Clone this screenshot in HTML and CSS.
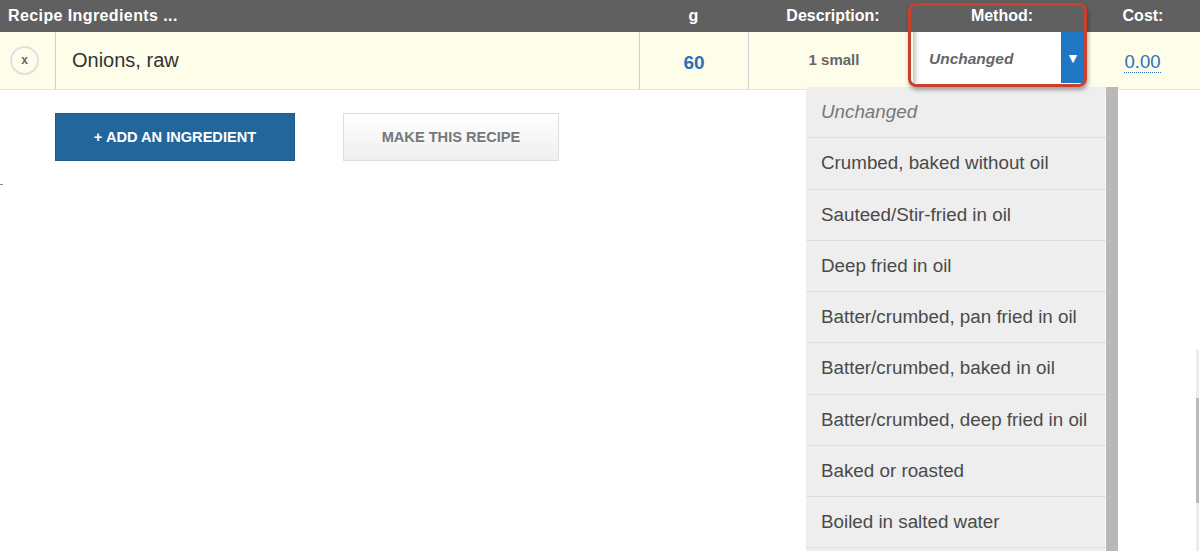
FILE: index.html
```html
<!DOCTYPE html>
<html>
<head>
<meta charset="utf-8">
<link rel="stylesheet" href="styles.css">
</head>
<body>
<div class="table">
  <div class="thead">
    <div class="th th-name">Recipe Ingredients ...</div>
    <div class="th">g</div>
    <div class="th">Description:</div>
    <div class="th">Method:</div>
    <div class="th">Cost:</div>
  </div>
  <div class="row">
    <div class="cell cell-del"><span class="del">x</span></div>
    <div class="cell cell-name">Onions, raw</div>
    <div class="cell cell-g">60</div>
    <div class="cell cell-desc">1 small</div>
    <div class="cell cell-method">
      <div class="select">
        <span class="select-val">Unchanged</span>
        <span class="select-arrow">&#9660;</span>
      </div>
    </div>
    <div class="cell cell-cost"><span class="cost">0.00</span></div>
  </div>
</div>
<div class="actions">
  <button class="btn btn-primary">+ ADD AN INGREDIENT</button>
  <button class="btn btn-secondary">MAKE THIS RECIPE</button>
</div>
<div class="dash"></div>

<div class="dropdown">
  <ul class="options">
    <li class="opt opt-current">Unchanged</li>
    <li class="opt">Crumbed, baked without oil</li>
    <li class="opt">Sauteed/Stir-fried in oil</li>
    <li class="opt">Deep fried in oil</li>
    <li class="opt">Batter/crumbed, pan fried in oil</li>
    <li class="opt">Batter/crumbed, baked in oil</li>
    <li class="opt">Batter/crumbed, deep fried in oil</li>
    <li class="opt">Baked or roasted</li>
    <li class="opt">Boiled in salted water</li>
  </ul>
  <div class="scrollbar"></div>
</div>

<div class="annot"></div>
<div class="page-scroll"><div class="page-thumb"></div></div>
</body>
</html>
```

FILE: styles.css
```css
* { box-sizing: border-box; }
html, body { margin: 0; padding: 0; }
body {
  width: 1200px;
  height: 551px;
  overflow: hidden;
  background: #ffffff;
  font-family: "Liberation Sans", Arial, sans-serif;
  position: relative;
}

.thead {
  display: grid;
  grid-template-columns: 639px 109px 170px 168px 1fr;
  height: 32px;
  background: #606060;
  align-items: center;
}
.th {
  color: #ffffff;
  font-weight: bold;
  font-size: 16px;
  text-align: center;
  padding-bottom: 1px;
}
.th-name { text-align: left; padding-left: 8px; letter-spacing: 0.4px; }

.row {
  display: grid;
  grid-template-columns: 56px 584px 109px 164px 172px 1fr;
  height: 58px;
  background: #fdfdea;
  border-bottom: 1px solid #e2e2e2;
}
.cell {
  display: flex;
  align-items: center;
  justify-content: center;
}
.cell-del, .cell-name, .cell-g { border-right: 1px solid #cfcfcf; }
.cell-del { padding-right: 6px; }
.del {
  width: 29px;
  height: 29px;
  border: 2px solid #e0e0e0;
  border-radius: 50%;
  display: flex;
  align-items: center;
  justify-content: center;
  font-size: 12px;
  font-weight: bold;
  color: #666;
  padding-bottom: 2px;
}
.cell-name {
  justify-content: flex-start;
  padding-left: 16px;
  font-size: 20px;
  color: #333;
}
.cell-g {
  font-size: 19px;
  font-weight: bold;
  color: #2a72b8;
  padding-top: 5px;
}
.cell-desc {
  font-size: 15px;
  font-weight: bold;
  color: #666;
  padding-bottom: 2px;
  padding-left: 6px;
}
.cell-method { align-items: flex-start; }
.select {
  width: 172px;
  height: 51px;
  background: #ffffff;
  box-shadow: inset 6px 0 4px -3px rgba(0,0,0,0.22);
  display: flex;
  align-items: stretch;
}
.select-val {
  flex: 1;
  display: flex;
  align-items: center;
  padding-left: 16px;
  padding-top: 2px;
  font-size: 15.5px;
  font-weight: bold;
  font-style: italic;
  color: #666;
}
.select-arrow {
  width: 24px;
  background: #1f76c2;
  color: #ffffff;
  font-size: 14px;
  display: flex;
  align-items: center;
  justify-content: center;
}
.cell-cost { padding-top: 4px; }
.cost {
  font-size: 18.5px;
  color: #2a72b8;
  border-bottom: 1px dotted #2a72b8;
  line-height: 20px;
}

.actions {
  display: flex;
  gap: 48px;
  padding-left: 55px;
  margin-top: 23px;
}
.btn {
  height: 48px;
  font-family: "Liberation Sans", Arial, sans-serif;
  font-weight: bold;
  font-size: 14.6px;
  cursor: pointer;
}
.btn-primary {
  width: 240px;
  background: #23669b;
  border: 1px solid #1d5b8d;
  color: #ffffff;
}
.btn-secondary {
  width: 216px;
  background: linear-gradient(#ffffff, #efefef);
  border: 1px solid #dddddd;
  color: #777777;
}
.dash {
  width: 3px;
  height: 1px;
  background: #888;
  margin-top: 23px;
}

.dropdown {
  position: absolute;
  left: 806px;
  top: 87px;
  height: 464px;
  display: flex;
  gap: 1px;
  overflow: hidden;
}
.options {
  list-style: none;
  margin: 0;
  padding: 0;
  width: 299px;
  height: 464px;
  background: #eeeeee;
  box-shadow: -1px 0 3px rgba(0,0,0,0.12);
}
.opt {
  height: 51.25px;
  border-bottom: 1px dotted #cccccc;
  display: flex;
  align-items: center;
  padding-left: 15px;
  font-size: 18.8px;
  color: #4a4a4a;
}
.opt-current { font-style: italic; color: #777777; }
.scrollbar {
  width: 12px;
  background: #b8b8b8;
}

.annot {
  position: absolute;
  left: 908px;
  top: 3px;
  width: 179px;
  height: 84px;
  border: 3px solid #c8412e;
  border-radius: 8px;
  box-shadow: 1px 3px 4px rgba(0,0,0,0.35);
}

.page-scroll {
  position: absolute;
  right: 1px;
  top: 350px;
  width: 3px;
  height: 201px;
  background: #ececec;
}
.page-thumb {
  margin-top: 48px;
  height: 105px;
  background: #b9b9b9;
}
```
